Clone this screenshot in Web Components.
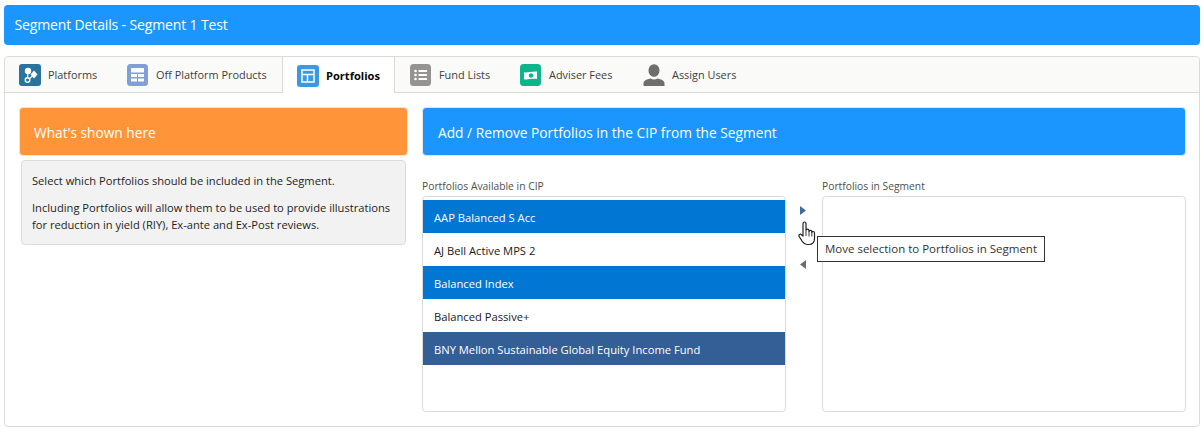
<!DOCTYPE html>
<html><head><meta charset="utf-8"><style>
html,body{margin:0;padding:0;background:#fff}
body{font-family:"Open Sans","Noto Sans",sans-serif;color:#1e1e1e;width:1204px;height:429px;overflow:hidden}
</style></head><body>
<seg-page>
<seg-banner>Segment Details - Segment 1 Test</seg-banner>
<seg-tabs>
 <seg-tab icon="platforms" slot="tabs" style="--w:108px">Platforms</seg-tab>
 <seg-tab icon="off" slot="tabs" style="--w:155px;--g:7px">Off Platform Products</seg-tab>
 <seg-tab icon="portfolios" active slot="tabs" style="--w:113px">Portfolios</seg-tab>
 <seg-tab icon="funds" slot="tabs" style="--w:110px">Fund Lists</seg-tab>
 <seg-tab icon="fees" slot="tabs" style="--w:123px">Adviser Fees</seg-tab>
 <seg-tab icon="user" slot="tabs" style="--w:120px">Assign Users</seg-tab>
 <seg-content>
   <seg-help>
     <p>Select which Portfolios should be included in the Segment.</p>
     <p>Including Portfolios will allow them to be used to provide illustrations<br>for reduction in yield (RIY), Ex-ante and Ex-Post reviews.</p>
   </seg-help>
   <seg-picker>
     <seg-item selected>AAP Balanced S Acc</seg-item>
     <seg-item>AJ Bell Active MPS 2</seg-item>
     <seg-item selected>Balanced Index</seg-item>
     <seg-item>Balanced Passive+</seg-item>
     <seg-item focused>BNY Mellon Sustainable Global Equity Income Fund</seg-item>
   </seg-picker>
 </seg-content>
</seg-tabs>
</seg-page>
<script>
function def(name, html, setup){
  customElements.define(name, class extends HTMLElement{
    constructor(){super();this.attachShadow({mode:'open'}).innerHTML=html;}
    connectedCallback(){ if(setup) setup(this); }
  });
}
def('seg-page',`<style>:host{display:block;padding:5px 4px 0}</style><slot></slot>`);
def('seg-banner',`<style>:host{display:flex;align-items:center;box-sizing:border-box;height:40px;padding:0 11px 1px 10.500px;background:#1b96ff;color:#fff;border-radius:4px;font-size:14px;letter-spacing:-.01em}</style><slot></slot>`);
def('seg-tabs',`<style>:host{display:block;box-sizing:border-box;margin-top:11px;height:371px;border:1px solid #dddbda;border-radius:4px;background:#fff}
.strip{display:flex;box-sizing:border-box;height:36px;padding-left:14px;background:#fafaf9;border-bottom:1px solid #dddbda;border-radius:4px 4px 0 0}</style>
<div class="strip"><slot name="tabs"></slot></div><slot></slot>`);
const icons={
platforms:`<rect width="22" height="22" rx="3" fill="#2a739e"/><circle cx="9" cy="7" r="3.200" fill="#fff"/><path d="M15 6.500l3.500 4-3.500 4-3.500-4z" fill="#fff"/><circle cx="8.500" cy="16" r="2.300" fill="none" stroke="#fff" stroke-width="1.400"/><path d="M9 9l-.5 5M10.500 14.500l3-2.500" stroke="#fff" stroke-width="1.100" fill="none"/>`,
off:`<rect width="21" height="22" rx="3.500" fill="#7f9fd6"/><rect x="4" y="4" width="13" height="4.500" rx=".6" fill="#fff"/><path d="M4 10h6v3H4zM11 10h6v3h-6zM4 14.500h6v3H4zM11 14.500h6v3h-6z" fill="#fff"/>`,
portfolios:`<rect width="22" height="22" rx="3" fill="#3a99e0"/><path d="M5 5h12v12H5z" fill="#3a99e0" stroke="#fff" stroke-width="1.500"/><path d="M5 9.500h12M10.500 9.500V17" stroke="#fff" stroke-width="1.500" fill="none"/>`,
funds:`<rect width="21" height="22" rx="3.500" fill="#969492"/><g fill="#fff"><circle cx="5.500" cy="7" r="1.300"/><circle cx="5.500" cy="11" r="1.300"/><circle cx="5.500" cy="15" r="1.300"/><rect x="8.500" y="6" width="8.500" height="2" rx=".5"/><rect x="8.500" y="10" width="8.500" height="2" rx=".5"/><rect x="8.500" y="14" width="8.500" height="2" rx=".5"/></g>`,
fees:`<rect width="21" height="22" rx="3.500" fill="#0eb58a"/><path d="M4 8.200c3.500 1 6-.8 13-.6V15c-6-.6-9.500 1-13 .2z" fill="#fff"/><circle cx="11" cy="11.500" r="2.200" fill="#0eb58a"/>`,
user:`<g fill="#706e6b"><ellipse cx="11" cy="6.500" rx="5.500" ry="6.300"/><path d="M.500 22v-2.800c0-2.700 3.800-4 7-4.700 2 1.400 5 1.400 7 0 3.200.7 7 2 7 4.700V22z"/></g>`};
def('seg-tab',`<style>:host{display:flex;align-items:center;box-sizing:border-box;width:var(--w);height:35px;font-size:10.900px;color:#3e3e3c;white-space:nowrap;flex:none}
:host([active]){background:#fff;color:#080707;font-weight:700;font-size:11.100px;margin-bottom:-1px;margin-right:15px;height:36px;border-left:1px solid #dddbda;border-right:1px solid #dddbda;padding-left:14px}
svg{width:22px;height:22px;flex:none;margin-right:7px;margin-top:1px}
</style><svg viewBox="0 0 22 22"></svg><span><slot></slot></span>`,el=>{el.shadowRoot.querySelector('svg').innerHTML=icons[el.getAttribute('icon')]});
def('seg-content',`<style>:host{display:flex;padding:14px 14px 0;gap:14px}</style><slot></slot>`);
def('seg-help',`<style>:host{display:block;width:389px;flex:none;font-size:11.150px;color:#1e1e1e}
.h{box-sizing:border-box;height:49px;display:flex;align-items:center;padding:2px 14px 0;background:#ff9538;color:#fff;font-size:13.700px;border:1px solid #e5e5e5;border-radius:4px}
.b{box-sizing:border-box;margin:4px 2px 0;height:85px;padding:11px 10px 0;background:#f2f2f2;border:1px solid #dddbda;border-radius:4px;line-height:17px}
::slotted(p){margin:0 0 10px;}</style>
<div class="h">What's shown here</div><div class="b"><slot></slot></div>`);
def('seg-picker',`<style>:host{display:block;width:764px;flex:none;position:relative}
.h{box-sizing:border-box;height:49px;display:flex;align-items:center;padding:2px 15px 0;background:#1b96ff;color:#fff;font-size:13.750px;border:1px solid #e5e5e5;border-radius:4px}
.row{display:flex;margin-top:23px}
.col{display:block;flex:none;width:364px}
label{display:block;font-size:10.300px;color:#514f4d;height:17px;line-height:14px}
.box{box-sizing:border-box;height:216px;border:1px solid #dddbda;border-radius:4px;padding:3px 0;background:#fff}
.mid{flex:none;width:36px;position:relative;display:flex;flex-direction:column;align-items:center;padding-top:26px;box-sizing:border-box}
.mid svg{display:block;width:8px;height:11px;margin-right:2px}
.mid svg+svg{margin-top:43px}
.tip{position:absolute;left:395px;top:129px;box-sizing:border-box;width:228px;height:26px;border:1px solid #333;background:#fff;color:#333;font-size:11.500px;display:flex;align-items:center;justify-content:center;white-space:nowrap;padding-bottom:1px}
.cur{position:absolute;left:376px;top:114px;width:19px;height:25px}
</style>
<div class="h">Add / Remove Portfolios in the CIP from the Segment</div>
<div class="row">
 <div class="col"><label>Portfolios Available in CIP</label><div class="box"><slot></slot></div></div>
 <div class="mid">
  <svg viewBox="0 0 8 11"><path d="M1 1l6 4.500-6 4.500z" fill="#3c6aa3"/></svg>
  <svg viewBox="0 0 8 11"><path d="M7 1l-6 4.500 6 4.500z" fill="#706e6b"/></svg>
 </div>
 <div class="col"><label>Portfolios in Segment</label><div class="box"></div></div>
</div>
<svg class="cur" viewBox="0 0 19 25"><path d="M5 2.500c0-2 3-2 3 0v7c0-1.800 3-1.800 3 0v1c0-1.600 2.800-1.600 2.800 0v1c0-1.400 2.700-1.400 2.700.2v5.800c0 3.500-2 6-5.500 6H9c-2.500 0-3.500-1.500-5-3.500L1.200 15.500c-1-1.800 1-3 2.300-1.800L5 15z" fill="#fff" stroke="#222" stroke-width="1.200" stroke-linejoin="round"/><path d="M8 10v5M11 10.500v5M13.800 11.500v4" stroke="#222" stroke-width=".9" fill="none"/></svg>
<div class="tip">Move selection to Portfolios in Segment</div>`);
def('seg-item',`<style>:host{display:flex;align-items:center;box-sizing:border-box;height:33px;padding:1px 11px 0;font-size:11.200px;color:#1a1a1a;white-space:nowrap}
:host([selected]){background:#0176d3;color:#fff}
:host([focused]){background:#335e96;color:#fff}</style><slot></slot>`);
</script>
</body></html>
